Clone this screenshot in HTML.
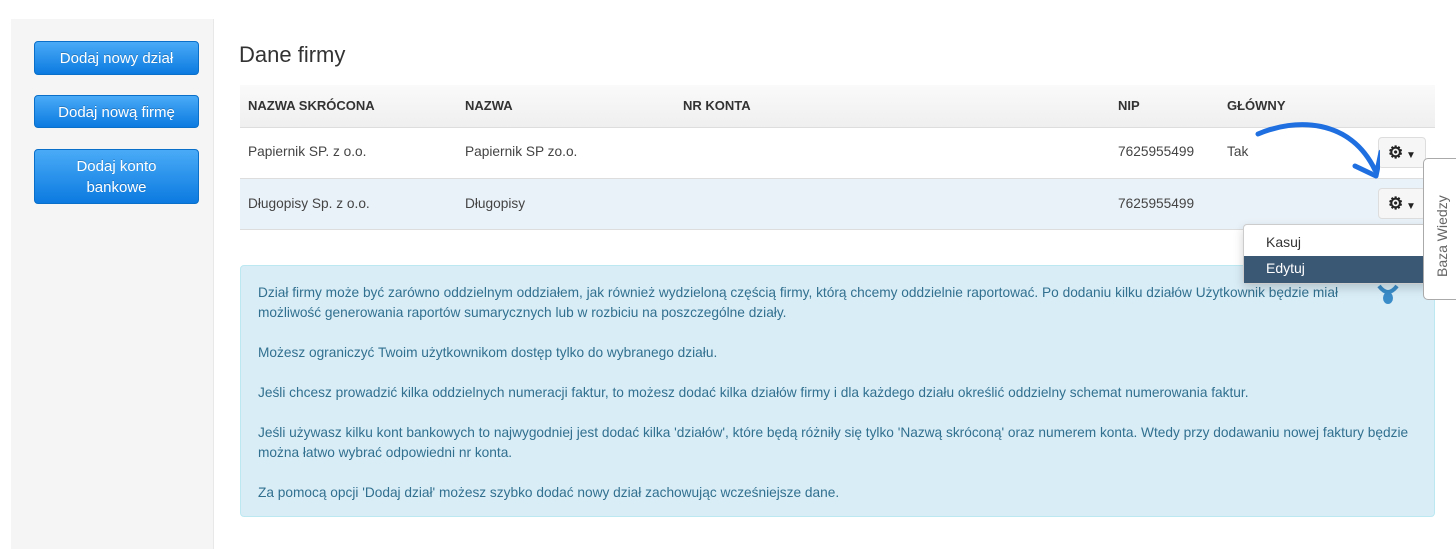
<!DOCTYPE html>
<html><head><meta charset="utf-8"><style>
*{box-sizing:border-box;margin:0;padding:0}
body{width:1456px;height:540px;background:#fff;font-family:"Liberation Sans",Arial,sans-serif;position:relative;overflow:hidden;color:#333}
.side{position:absolute;left:11px;top:19px;width:203px;height:530px;background:#f5f5f5;border-right:1px solid #e8e8e8}
.btn{position:absolute;left:23px;width:165px;background:linear-gradient(#4aabf7,#0b7ae0);border:1px solid #0a6fc9;border-radius:4px;color:#fff;font-size:15px;text-align:center;text-shadow:0 -1px 0 rgba(0,0,0,.2);line-height:21px}
h2{position:absolute;left:239px;top:42px;font-size:22px;font-weight:normal;color:#333}
.th{position:absolute;left:240px;top:85px;width:1195px;height:42px;background:linear-gradient(#fafafa,#efefef)}
.row{position:absolute;left:240px;width:1195px;height:51px;border-top:1px solid #ddd}
.c{position:absolute;font-size:13.7px;color:#444}
.h{font-weight:bold;font-size:13px;color:#333}
.gear{position:absolute;left:1378px;width:48px;height:31px;background:#f6f6f6;border:1px solid #ddd;border-radius:4px;text-align:center;line-height:29px;color:#222}
.info{position:absolute;left:240px;top:265px;width:1195px;height:252px;background:#d9edf7;border:1px solid #bce8f1;border-radius:4px;color:#31708f;font-size:13.7px;line-height:20px;padding:17px 17px}
.info p{margin-bottom:20px}
.menu{position:absolute;left:1243px;top:224px;width:190px;height:60px;background:#fff;border:1px solid #ccc;border-radius:4px;box-shadow:0 4px 10px rgba(0,0,0,.18);font-size:14px}
.tab{position:absolute;left:1423px;top:158px;width:40px;height:142px;background:#fff;border:1px solid #aaa;border-radius:5px 0 0 5px}
</style></head><body>
<div class="side">
<div class="btn" style="top:22px;height:34px;padding-top:6px">Dodaj nowy dział</div>
<div class="btn" style="top:76px;height:33px;padding-top:6px">Dodaj nową firmę</div>
<div class="btn" style="top:130px;height:55px;padding-top:6px">Dodaj konto<br>bankowe</div>
</div>
<h2>Dane firmy</h2>
<div class="th"></div>
<div class="c h" style="left:248px;top:98px">NAZWA SKRÓCONA</div>
<div class="c h" style="left:465px;top:98px">NAZWA</div>
<div class="c h" style="left:683px;top:98px">NR KONTA</div>
<div class="c h" style="left:1118px;top:98px">NIP</div>
<div class="c h" style="left:1227px;top:98px">GŁÓWNY</div>
<div class="row" style="top:127px;background:#fff"></div>
<div class="row" style="top:178px;background:#eaf2f9"></div>
<div class="row" style="top:229px;height:1px"></div>
<div class="c" style="left:248px;top:144px">Papiernik SP. z o.o.</div>
<div class="c" style="left:465px;top:144px">Papiernik SP zo.o.</div>
<div class="c" style="left:1118px;top:144px">7625955499</div>
<div class="c" style="left:1227px;top:144px">Tak</div>
<div class="c" style="left:248px;top:196px">Długopisy Sp. z o.o.</div>
<div class="c" style="left:465px;top:196px">Długopisy</div>
<div class="c" style="left:1118px;top:196px">7625955499</div>
<div class="gear" style="top:137px"><b style="font-size:17px">⚙</b><span style="font-size:10px"> ▼</span></div>
<div class="gear" style="top:188px"><b style="font-size:17px">⚙</b><span style="font-size:10px"> ▼</span></div>
<div class="info">
<p>Dział firmy może być zarówno oddzielnym oddziałem, jak również wydzieloną częścią firmy, którą chcemy oddzielnie raportować. Po dodaniu kilku działów Użytkownik będzie miał<br>możliwość generowania raportów sumarycznych lub w rozbiciu na poszczególne działy.</p>
<p>Możesz ograniczyć Twoim użytkownikom dostęp tylko do wybranego działu.</p>
<p>Jeśli chcesz prowadzić kilka oddzielnych numeracji faktur, to możesz dodać kilka działów firmy i dla każdego działu określić oddzielny schemat numerowania faktur.</p>
<p>Jeśli używasz kilku kont bankowych to najwygodniej jest dodać kilka 'działów', które będą różniły się tylko 'Nazwą skróconą' oraz numerem konta. Wtedy przy dodawaniu nowej faktury będzie można łatwo wybrać odpowiedni nr konta.</p>
<p>Za pomocą opcji 'Dodaj dział' możesz szybko dodać nowy dział zachowując wcześniejsze dane.</p>
</div>
<svg style="position:absolute;left:1376px;top:284px" width="24" height="24"><path d="M3 2 Q12 14 21 2" stroke="#3a8cc8" stroke-width="4" fill="none"/><ellipse cx="12" cy="14" rx="5" ry="6" fill="#3a8cc8"/></svg>
<div class="menu">
<div style="position:absolute;left:22px;top:9px;color:#333">Kasuj</div>
<div style="position:absolute;left:0;top:31px;width:100%;height:27px;background:#3a5773;color:#fff;padding:4px 22px">Edytuj</div>
</div>
<div class="tab"><div style="position:absolute;left:10px;top:118px;transform:rotate(-90deg);transform-origin:0 0;font-size:14px;color:#666;white-space:nowrap">Baza Wiedzy</div></div>
<svg style="position:absolute;left:1250px;top:118px" width="130" height="65"><path d="M8 16 C45 0 100 0 125 52" stroke="#1f6fe0" stroke-width="5" fill="none" stroke-linecap="round"/><path d="M105 48 L126 58 L131 34" stroke="#1f6fe0" stroke-width="5" fill="none" stroke-linecap="round" stroke-linejoin="round"/></svg>
</body></html>
